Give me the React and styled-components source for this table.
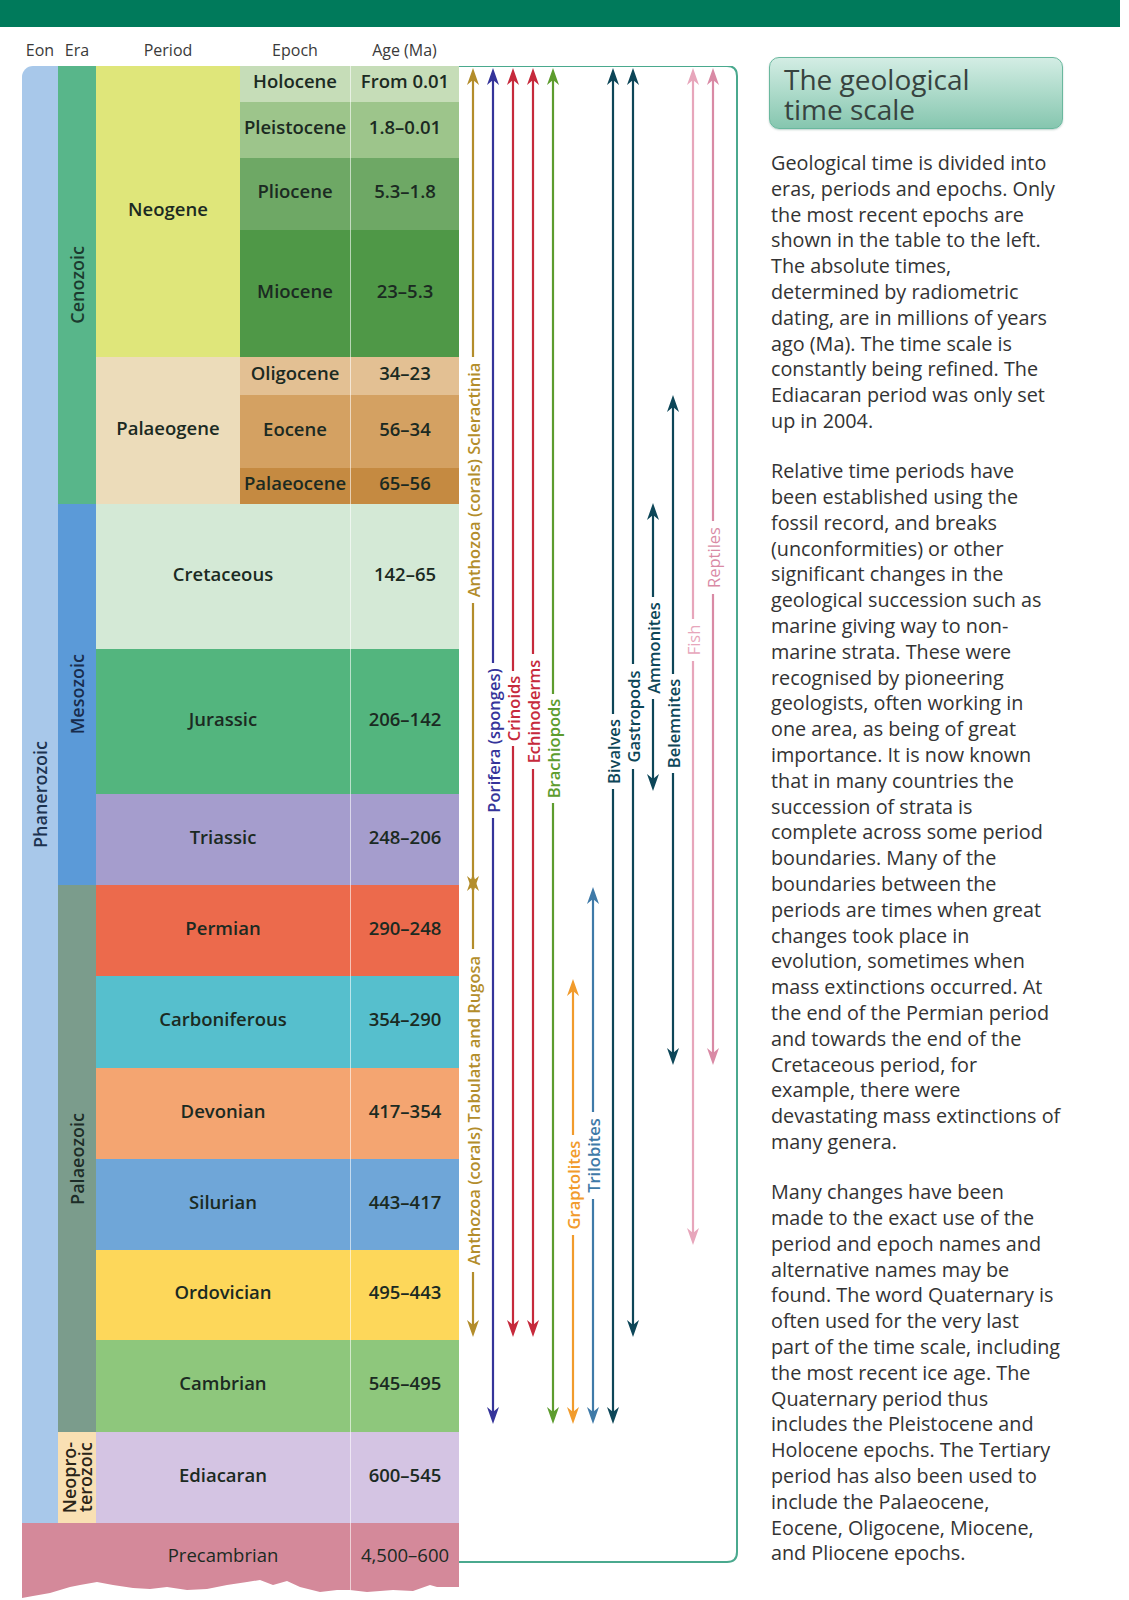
import React from "react";
import styled, { createGlobalStyle } from "styled-components";

const GlobalStyle = createGlobalStyle`
  html, body {
    margin: 0;
    padding: 0;
    background: #fff;
  }
  body {
    font-family: "Open Sans", "Noto Sans", sans-serif;
  }
`;

const COLS = "36px 38px 144px 110px 109px";
const ROW_HEIGHTS = [36, 56, 72, 127, 38, 73, 36, 145, 145, 91, 91, 92, 91, 91, 90, 92, 91, 77];

// torn paper edge at the bottom of the Precambrian row (table coords)
const TEAR = [
  [437, 1521], [415, 1521], [408, 1519], [391, 1525], [371, 1524], [345, 1526],
  [328, 1524], [315, 1524], [298, 1526], [278, 1521], [265, 1515], [251, 1519],
  [238, 1514], [225, 1516], [205, 1519], [185, 1523], [165, 1524], [145, 1521],
  [128, 1523], [111, 1522], [91, 1519], [75, 1516], [58, 1519], [48, 1521],
  [28, 1527], [11, 1530], [0, 1532],
];

const Page = styled.div`
  width: 1129px;
  height: 1600px;
  overflow: hidden;
  background: #fff;
`;

const TopBar = styled.div`
  width: 1120px;
  height: 27px;
  background: #007a5b;
`;

const Content = styled.div`
  display: flex;
  padding-left: 22px;
`;

const LeftPane = styled.div`
  display: flex;
  flex-direction: column;
  width: 718px;
  flex: none;
`;

const HeaderRow = styled.div`
  display: grid;
  grid-template-columns: ${COLS};
  height: 39px;
  box-sizing: border-box;
  padding-bottom: 5px;
  align-items: end;
`;

const HeaderCell = styled.div`
  text-align: center;
  font-size: 16px;
  line-height: 22px;
  color: #3a3a3a;
  white-space: nowrap;
`;

const Body = styled.div`
  display: flex;
  align-items: flex-start;
`;

const Table = styled.div`
  display: grid;
  grid-template-columns: ${COLS};
  grid-template-rows: ${ROW_HEIGHTS.map((h) => h + "px").join(" ")};
  width: 437px;
  height: 1534px;
  flex: none;
  clip-path: polygon(0 0, 437px 0, ${TEAR.map(([x, y]) => `${x}px ${y}px`).join(", ")});
`;

const Cell = styled.div`
  grid-column: ${(p) => p.$col};
  grid-row: ${(p) => p.$row};
  background: ${(p) => p.$bg};
  display: flex;
  align-items: center;
  justify-content: center;
  padding-bottom: ${(p) => (p.$side ? 0 : p.$lift || 7)}px;
  font-size: 18.5px;
  font-weight: ${(p) => (p.$light ? 500 : 600)};
  color: #1b2a22;
  white-space: nowrap;
  ${(p) => p.$divider && "border-left: 1px solid rgba(255, 255, 255, 0.6);"}
  ${(p) => p.$indent && `padding-left: ${p.$indent}px;`}
`;

const EonCell = styled(Cell)`
  border-top-left-radius: 11px;
`;

const SideLabel = styled.span`
  writing-mode: vertical-rl;
  transform: rotate(180deg);
  font-size: 18px;
  font-weight: 600;
  color: ${(p) => p.$color || "#1d2e36"};
  line-height: ${(p) => (p.$tight ? "16px" : "normal")};
  white-space: pre;
  text-align: center;
`;

const Chart = styled.svg`
  display: block;
  flex: none;
`;

const Aside = styled.aside`
  margin-left: 29px;
  padding-top: 30px;
  width: 350px;
`;

const TitleBox = styled.div`
  width: 294px;
  height: 72px;
  box-sizing: border-box;
  padding: 6px 14px;
  border-radius: 10px;
  border: 1px solid #6ab89e;
  background: linear-gradient(180deg, #d3ede4 0%, #b0dccc 45%, #86c6af 100%);
  box-shadow: 0 1px 2px rgba(0, 80, 60, 0.25);
`;

const Title = styled.h1`
  margin: 0;
  font-size: 28px;
  line-height: 30px;
  font-weight: 400;
  color: #37433f;
`;

const TextBlock = styled.div`
  margin-top: 21px;
  padding-left: 2px;
`;

const Para = styled.p`
  margin: 0 0 24.5px;
  font-size: 19.8px;
  line-height: 25.8px;
  color: #333;
  white-space: pre-line;
`;

const GOLD = "#b38d2b";
const PURPLE = "#35349a";
const RED = "#c62a3c";
const GREEN = "#5d9c2e";
const ORANGE = "#f19b2c";
const STEEL = "#3f7aa8";
const TEAL = "#0d4658";
const PINK = "#d98aa5";
const FISH = "#e7a6bb";

const ARROWS = [
  { x: 473, y1: 68, y2: 893, c: GOLD, label: "Anthozoa (corals) Scleractinia", l1: 363, l2: 597 },
  { x: 473, y1: 874, y2: 1337, c: GOLD, label: "Anthozoa (corals) Tabulata and Rugosa", l1: 955, l2: 1266 },
  { x: 493, y1: 68, y2: 1424, c: PURPLE, label: "Porifera (sponges)", l1: 669, l2: 812 },
  { x: 513, y1: 68, y2: 1337, c: RED, label: "Crinoids", l1: 677, l2: 740 },
  { x: 533, y1: 68, y2: 1337, c: RED, label: "Echinoderms", l1: 660, l2: 763 },
  { x: 553, y1: 68, y2: 1424, c: GREEN, label: "Brachiopods", l1: 700, l2: 797 },
  { x: 573, y1: 979, y2: 1424, c: ORANGE, label: "Graptolites", l1: 1141, l2: 1229 },
  { x: 593, y1: 887, y2: 1424, c: STEEL, label: "Trilobites", l1: 1118, l2: 1193 },
  { x: 613, y1: 68, y2: 1424, c: TEAL, label: "Bivalves", l1: 720, l2: 783 },
  { x: 633, y1: 68, y2: 1337, c: TEAL, label: "Gastropods", l1: 670, l2: 763 },
  { x: 653, y1: 503, y2: 791, c: TEAL, label: "Ammonites", l1: 603, l2: 693 },
  { x: 673, y1: 395, y2: 1065, c: TEAL, label: "Belemnites", l1: 680, l2: 767 },
  { x: 693, y1: 68, y2: 1245, c: FISH, label: "Fish", l1: 625, l2: 655, thin: true },
  { x: 713, y1: 68, y2: 1065, c: PINK, label: "Reptiles", l1: 527, l2: 588, thin: true },
];

const HEAD_H = 17;
const HEAD_W = 6;
const NOTCH = 12;

const upHead = (x, y) =>
  `M${x} ${y} L${x - HEAD_W} ${y + HEAD_H} L${x} ${y + NOTCH} L${x + HEAD_W} ${y + HEAD_H} Z`;
const downHead = (x, y) =>
  `M${x} ${y} L${x - HEAD_W} ${y - HEAD_H} L${x} ${y - NOTCH} L${x + HEAD_W} ${y - HEAD_H} Z`;

const Arrow = ({ a }) => {
  const cy = (a.l1 + a.l2) / 2;
  return (
    <g>
      <line x1={a.x} x2={a.x} y1={a.y1 + NOTCH} y2={a.l1 - 6} stroke={a.c} strokeWidth="2.2" />
      <line x1={a.x} x2={a.x} y1={a.l2 + 6} y2={a.y2 - NOTCH} stroke={a.c} strokeWidth="2.2" />
      <path d={upHead(a.x, a.y1)} fill={a.c} />
      <path d={downHead(a.x, a.y2)} fill={a.c} />
      <text
        transform={`translate(${a.x} ${cy}) rotate(-90)`}
        textAnchor="middle"
        dominantBaseline="central"
        fontFamily="'Open Sans', 'Noto Sans', sans-serif"
        fontSize="16.5"
        fontWeight={a.thin ? 400 : 600}
        fill={a.c}
      >
        {a.label}
      </text>
    </g>
  );
};

const EPOCHS = [
  { row: 1, name: "Holocene", age: "From 0.01", bg: "#c6ddb8" },
  { row: 2, name: "Pleistocene", age: "1.8–0.01", bg: "#9dc58b" },
  { row: 3, name: "Pliocene", age: "5.3–1.8", bg: "#6ea865" },
  { row: 4, name: "Miocene", age: "23–5.3", bg: "#4f9847" },
  { row: 5, name: "Oligocene", age: "34–23", bg: "#e3c093" },
  { row: 6, name: "Eocene", age: "56–34", bg: "#d4a162" },
  { row: 7, name: "Palaeocene", age: "65–56", bg: "#c58a41" },
];

const PERIODS = [
  { row: 8, name: "Cretaceous", age: "142–65", bg: "#d4e9d6" },
  { row: 9, name: "Jurassic", age: "206–142", bg: "#53b57e" },
  { row: 10, name: "Triassic", age: "248–206", bg: "#a59dcd" },
  { row: 11, name: "Permian", age: "290–248", bg: "#ec6a4c" },
  { row: 12, name: "Carboniferous", age: "354–290", bg: "#56bfcd" },
  { row: 13, name: "Devonian", age: "417–354", bg: "#f4a571" },
  { row: 14, name: "Silurian", age: "443–417", bg: "#6fa6d8" },
  { row: 15, name: "Ordovician", age: "495–443", bg: "#fdd75a" },
  { row: 16, name: "Cambrian", age: "545–495", bg: "#8ec77c" },
  { row: 17, name: "Ediacaran", age: "600–545", bg: "#d4c4e3" },
];

const P1 = [
  "Geological time is divided into",
  "eras, periods and epochs. Only",
  "the most recent epochs are",
  "shown in the table to the left.",
  "The absolute times,",
  "determined by radiometric",
  "dating, are in millions of years",
  "ago (Ma). The time scale is",
  "constantly being refined. The",
  "Ediacaran period was only set",
  "up in 2004.",
];

const P2 = [
  "Relative time periods have",
  "been established using the",
  "fossil record, and breaks",
  "(unconformities) or other",
  "significant changes in the",
  "geological succession such as",
  "marine giving way to non-",
  "marine strata. These were",
  "recognised by pioneering",
  "geologists, often working in",
  "one area, as being of great",
  "importance. It is now known",
  "that in many countries the",
  "succession of strata is",
  "complete across some period",
  "boundaries. Many of the",
  "boundaries between the",
  "periods are times when great",
  "changes took place in",
  "evolution, sometimes when",
  "mass extinctions occurred. At",
  "the end of the Permian period",
  "and towards the end of the",
  "Cretaceous period, for",
  "example, there were",
  "devastating mass extinctions of",
  "many genera.",
];

const P3 = [
  "Many changes have been",
  "made to the exact use of the",
  "period and epoch names and",
  "alternative names may be",
  "found. The word Quaternary is",
  "often used for the very last",
  "part of the time scale, including",
  "the most recent ice age. The",
  "Quaternary period thus",
  "includes the Pleistocene and",
  "Holocene epochs. The Tertiary",
  "period has also been used to",
  "include the Palaeocene,",
  "Eocene, Oligocene, Miocene,",
  "and Pliocene epochs.",
];

export default function App() {
  return (
    <Page>
      <GlobalStyle />
      <TopBar />
      <Content>
        <LeftPane>
          <HeaderRow>
            <HeaderCell>Eon</HeaderCell>
            <HeaderCell>Era</HeaderCell>
            <HeaderCell>Period</HeaderCell>
            <HeaderCell>Epoch</HeaderCell>
            <HeaderCell>Age (Ma)</HeaderCell>
          </HeaderRow>
          <Body>
            <Table>
              <EonCell $side $col="1" $row="1 / 18" $bg="#a8c8ea">
                <SideLabel $color="#1c3350">Phanerozoic</SideLabel>
              </EonCell>
              <Cell $side $col="2" $row="1 / 8" $bg="#58b68a">
                <SideLabel $color="#1b3a2e">Cenozoic</SideLabel>
              </Cell>
              <Cell $side $col="2" $row="8 / 11" $bg="#5b9ad8">
                <SideLabel $color="#182c4c">Mesozoic</SideLabel>
              </Cell>
              <Cell $side $col="2" $row="11 / 17" $bg="#7b9c8c">
                <SideLabel $color="#1c2c27">Palaeozoic</SideLabel>
              </Cell>
              <Cell $side $col="2" $row="17" $bg="#f9e0b3">
                <SideLabel $tight $color="#2a2418">{"Neopro-\nterozoic"}</SideLabel>
              </Cell>

              <Cell $col="3" $row="1 / 5" $bg="#dfe67a">Neogene</Cell>
              <Cell $col="3" $row="5 / 8" $bg="#ecdcba">Palaeogene</Cell>

              {EPOCHS.map((e) => (
                <React.Fragment key={e.name}>
                  <Cell $col="4" $row={e.row} $bg={e.bg}>{e.name}</Cell>
                  <Cell $col="5" $row={e.row} $bg={e.bg} $divider>{e.age}</Cell>
                </React.Fragment>
              ))}

              {PERIODS.map((p) => (
                <React.Fragment key={p.name}>
                  <Cell $col="3 / 5" $row={p.row} $bg={p.bg}>{p.name}</Cell>
                  <Cell $col="5" $row={p.row} $bg={p.bg} $divider>{p.age}</Cell>
                </React.Fragment>
              ))}

              <Cell $col="1 / 5" $row="18" $bg="#d4899a" $indent={74} $lift={14} $light>
                Precambrian
              </Cell>
              <Cell $col="5" $row="18" $bg="#d4899a" $lift={14} $divider $light>
                4,500–600
              </Cell>
            </Table>

            <Chart width="281" height="1534" viewBox="459 66 281 1534">
              <path
                d="M459 66 H727 Q737 66 737 76 V1552 Q737 1562 727 1562 H459"
                fill="none"
                stroke="#4aa98e"
                strokeWidth="2"
              />
              {ARROWS.map((a) => (
                <Arrow key={a.label} a={a} />
              ))}
            </Chart>
          </Body>
        </LeftPane>

        <Aside>
          <TitleBox>
            <Title>
              The geological
              <br />
              time scale
            </Title>
          </TitleBox>
          <TextBlock>
            <Para>{P1.join("\n")}</Para>
            <Para>{P2.join("\n")}</Para>
            <Para>{P3.join("\n")}</Para>
          </TextBlock>
        </Aside>
      </Content>
    </Page>
  );
}
